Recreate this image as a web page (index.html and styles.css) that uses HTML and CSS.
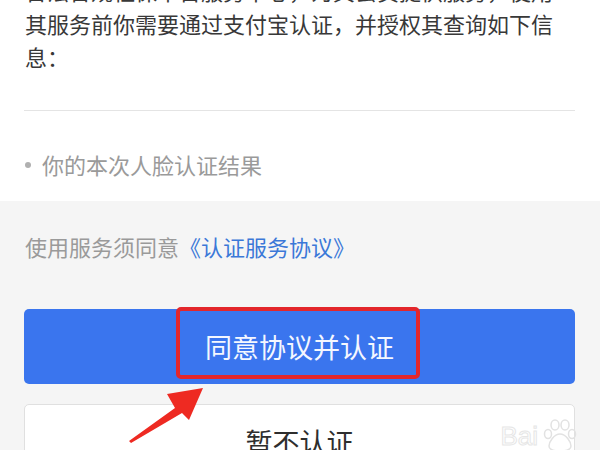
FILE: index.html
```html
<!DOCTYPE html>
<html lang="zh-CN">
<head>
    <meta charset="UTF-8">
    <meta name="viewport" content="width=device-width, initial-scale=1.0">
    <title>支付宝认证</title>
    <link rel="stylesheet" href="styles.css">
</head>
<body>
    <div class="page">
        <section class="info">
            <p class="intro">合法合规社保平台服务中心，为其会员提供服务，使用<br>其服务前你需要通过支付宝认证，并授权其查询如下信<br>息：</p>
            <div class="divider"></div>
            <ul class="scope">
                <li>你的本次人脸认证结果</li>
            </ul>
        </section>

        <section class="actions">
            <p class="agree">使用服务须同意<a href="#" class="agree-link">《认证服务协议》</a></p>
            <button class="btn btn-primary">
                同意协议并认证
                <span class="mark"></span>
            </button>
            <button class="btn btn-ghost">暂不认证</button>
        </section>

        <!-- annotation arrow -->
        <svg class="arrow" width="90" height="60" viewBox="0 0 90 60">
            <polygon points="0,53 46,20 38,6 74,0 60,32 53,25 2,55" fill="#ee2a22"/>
        </svg>

        <div class="watermark">
            <span>Bai</span>
            <svg width="40" height="34" viewBox="0 0 40 34">
                <g fill="none" stroke="#e2e2e2" stroke-width="1.5">
                    <ellipse cx="15" cy="7" rx="4" ry="5"/>
                    <ellipse cx="25" cy="7" rx="4" ry="5"/>
                    <ellipse cx="8" cy="16" rx="3.5" ry="4.5"/>
                    <ellipse cx="32" cy="16" rx="3.5" ry="4.5"/>
                    <path d="M20 16c-6 0-11 8-11 12s4 5 11 5 11-1 11-5-5-12-11-12z"/>
                </g>
            </svg>
        </div>
    </div>
</body>
</html>
```

FILE: styles.css
```css
* {
    margin: 0;
    padding: 0;
    box-sizing: border-box;
}

html, body {
    height: 100%;
    overflow: hidden;
}

body {
    font-family: "Noto Sans CJK SC", "Noto Sans", sans-serif;
    background: #f5f5f5;
    color: #333;
}

.page {
    position: relative;
    height: 450px;
    overflow: hidden;
}

.info {
    background: #fff;
    padding: 0 25px 20px;
}

.intro {
    margin-top: -26px;
    font-size: 22px;
    line-height: 33px;
    color: #383838;
}

.divider {
    height: 1px;
    background: #e4e4e4;
    margin: 37px 0 37px -1px;
}

.scope {
    list-style: none;
}

.scope li {
    display: flex;
    align-items: center;
    gap: 11px;
    font-size: 22px;
    line-height: 33px;
    color: #9a9a9a;
}

.scope li::before {
    content: "";
    width: 6px;
    height: 6px;
    border-radius: 50%;
    background: #b0b0b0;
}

.actions {
    padding: 29px 25px 0 24px;
    display: flex;
    flex-direction: column;
}

.agree {
    font-size: 22px;
    line-height: 33px;
    color: #9a9a9a;
    padding-left: 1px;
}

.agree-link {
    color: #3b78d8;
    text-decoration: none;
}

.btn {
    height: 75px;
    border-radius: 5px;
    font-family: inherit;
    font-size: 27px;
    cursor: pointer;
}

.btn-primary {
    position: relative;
    margin-top: 46px;
    background: #3a75ee;
    color: #f4f7ff;
    border: none;
}

.mark {
    position: absolute;
    left: 152px;
    top: -2px;
    width: 244px;
    height: 72px;
    border: 4px solid #e3262b;
    border-radius: 5px;
}

.btn-ghost {
    margin-top: 20px;
    background: #fff;
    color: #2e2e2e;
    border: 1px solid #e0e0e0;
}

.arrow {
    position: absolute;
    left: 129px;
    top: 388px;
}

.watermark {
    position: absolute;
    right: 20px;
    top: 418px;
    display: flex;
    align-items: flex-end;
    gap: 2px;
    font-family: "Liberation Sans", sans-serif;
    font-size: 26px;
    color: transparent;
    -webkit-text-stroke: 1px #e6e6e6;
}
```
